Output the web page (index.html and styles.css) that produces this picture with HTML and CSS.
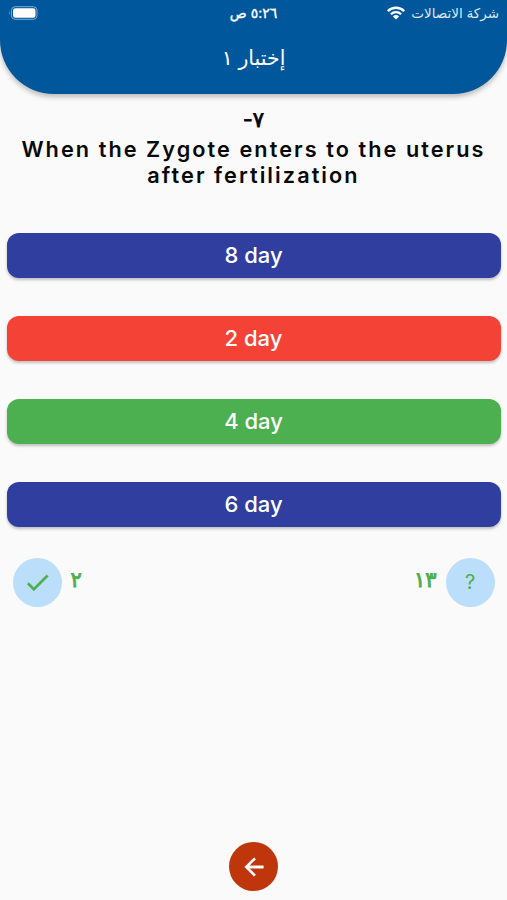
FILE: index.html
```html
<!DOCTYPE html>
<html lang="ar" dir="rtl">
<head>
<meta charset="utf-8">
<title>إختبار ١</title>
<link rel="stylesheet" href="styles.css">
</head>
<body>
<header class="header">
  <div class="status">
    <div class="carrier">
      <span class="carrier-name">شركة الاتصالات</span>
      <svg class="wifi" viewBox="0 0 18 14" width="18" height="14"><g fill="none" stroke="#fff" stroke-width="2.3"><path d="M.8 5.1C5.300 .6 12.700 .6 17.200 5.100"/><path d="M3.900 8.200C6.700 5.400 11.300 5.400 14.100 8.200"/></g><path fill="#fff" d="M5.900 10.400Q9 7.700 12.100 10.400L9 13.500Z"/></svg>
    </div>
    <span class="time">٥:٢٦ ص</span>
    <svg class="battery" viewBox="0 0 30 14" width="30" height="14"><rect x="3.500" y=".7" width="25.500" height="12.600" rx="3.600" fill="none" stroke="#7fabd0" stroke-width="1"/><rect x="5" y="2.200" width="22.500" height="9.600" rx="2.300" fill="#fff"/><path d="M1.800 4.800Q.2 7 1.800 9.200Z" fill="#7fabd0"/></svg>
  </div>
  <h1 class="title">إختبار ١</h1>
</header>
<main class="quiz">
  <div class="number">٧-</div>
  <h2 class="question" dir="ltr">When the Zygote enters to the uterus<br>after fertilization</h2>
  <div class="answers" dir="ltr">
    <button class="answer">8 day</button>
    <button class="answer wrong">2 day</button>
    <button class="answer right">4 day</button>
    <button class="answer">6 day</button>
  </div>
  <div class="scores">
    <div class="score"><span class="circle mark">?</span><span class="count">١٣</span></div>
    <div class="score"><span class="count">٢</span><span class="circle"><svg viewBox="0 0 24 24" width="29" height="29"><path fill="#4caf50" stroke="#4caf50" stroke-width=".3" d="M9 16.170 4.830 12l-1.420 1.410L9 19 21 7l-1.410-1.410z"/></svg></span></div>
  </div>
</main>
<footer class="footer">
  <button class="next"><svg viewBox="0 0 24 24" width="28" height="28"><path fill="#fff" stroke="#fff" stroke-width=".4" d="M20 11H7.830l5.590-5.590L12 4l-8 8 8 8 1.410-1.410L7.830 13H20z"/></svg></button>
</footer>
</body>
</html>
```
FILE: styles.css
```css
* { box-sizing: border-box; }
body {
  margin: 0;
  height: 900px;
  display: flex;
  flex-direction: column;
  overflow: hidden;
  background: #fafafa;
  font-family: Inter, "DejaVu Sans", sans-serif;
}
.header {
  height: 94px;
  flex: none;
  background: #01579b;
  border-radius: 0 0 54px 54px;
  box-shadow: 0 3px 5px rgba(0, 0, 0, .25);
  color: #fff;
}
.status {
  height: 26px;
  padding: 0 8px;
  display: grid;
  grid-template-columns: 1fr auto 1fr;
  align-items: center;
}
.carrier { display: flex; align-items: center; gap: 6px; }
.carrier-name { font-size: 13.500px; line-height: 26px; white-space: nowrap; color: #dce8f2; }
.wifi { flex: none; }
.time {
  font-size: 14px;
  line-height: 24px;
  -webkit-text-stroke: .35px #fff;
}
.battery { justify-self: end; }
.title {
  margin: 16px 0 0;
  font-size: 20.500px;
  font-weight: 400;
  line-height: 32px;
  text-align: center;
}
.quiz { flex: 1; padding: 12px 6.500px 0; }
.number {
  height: 31px;
  font-size: 21px;
  -webkit-text-stroke: .8px #080808;
  line-height: 28px;
  text-align: center;
}
.question {
  margin: 0;
  height: 95.600px;
  font-size: 21.700px;
  font-weight: 600;
  letter-spacing: 2.050px;
  line-height: 25.500px;
  text-align: center;
  white-space: nowrap;
  color: #080808;
}
.answers { display: grid; gap: 38px; }
.answer {
  height: 45px;
  padding: 0;
  border: 0;
  border-radius: 12px;
  background: #303f9f;
  box-shadow: 0 2px 3px rgba(0, 0, 0, .24);
  color: #fff;
  font: 500 22px/45px Inter, sans-serif;
}
.wrong { background: #f44336; }
.right { background: #4caf50; }
.scores { display: flex; justify-content: space-between; padding: 31px 6px 0; }
.score { display: flex; gap: 9px; }
.circle {
  width: 49px;
  height: 49px;
  border-radius: 50%;
  display: flex;
  align-items: center;
  justify-content: center;
  background: #bbdefb;
  color: #4caf50;
}
.mark { font-size: 20px; }
.count {
  color: #4caf50;
  font-size: 21px;
  -webkit-text-stroke: .9px #4caf50;
  line-height: 44px;
}
.footer { display: flex; justify-content: center; padding-bottom: 9px; }
.next {
  width: 49px;
  height: 49px;
  padding: 0;
  border: 0;
  border-radius: 50%;
  display: flex;
  align-items: center;
  justify-content: center;
  background: #bf360c;
}
```
